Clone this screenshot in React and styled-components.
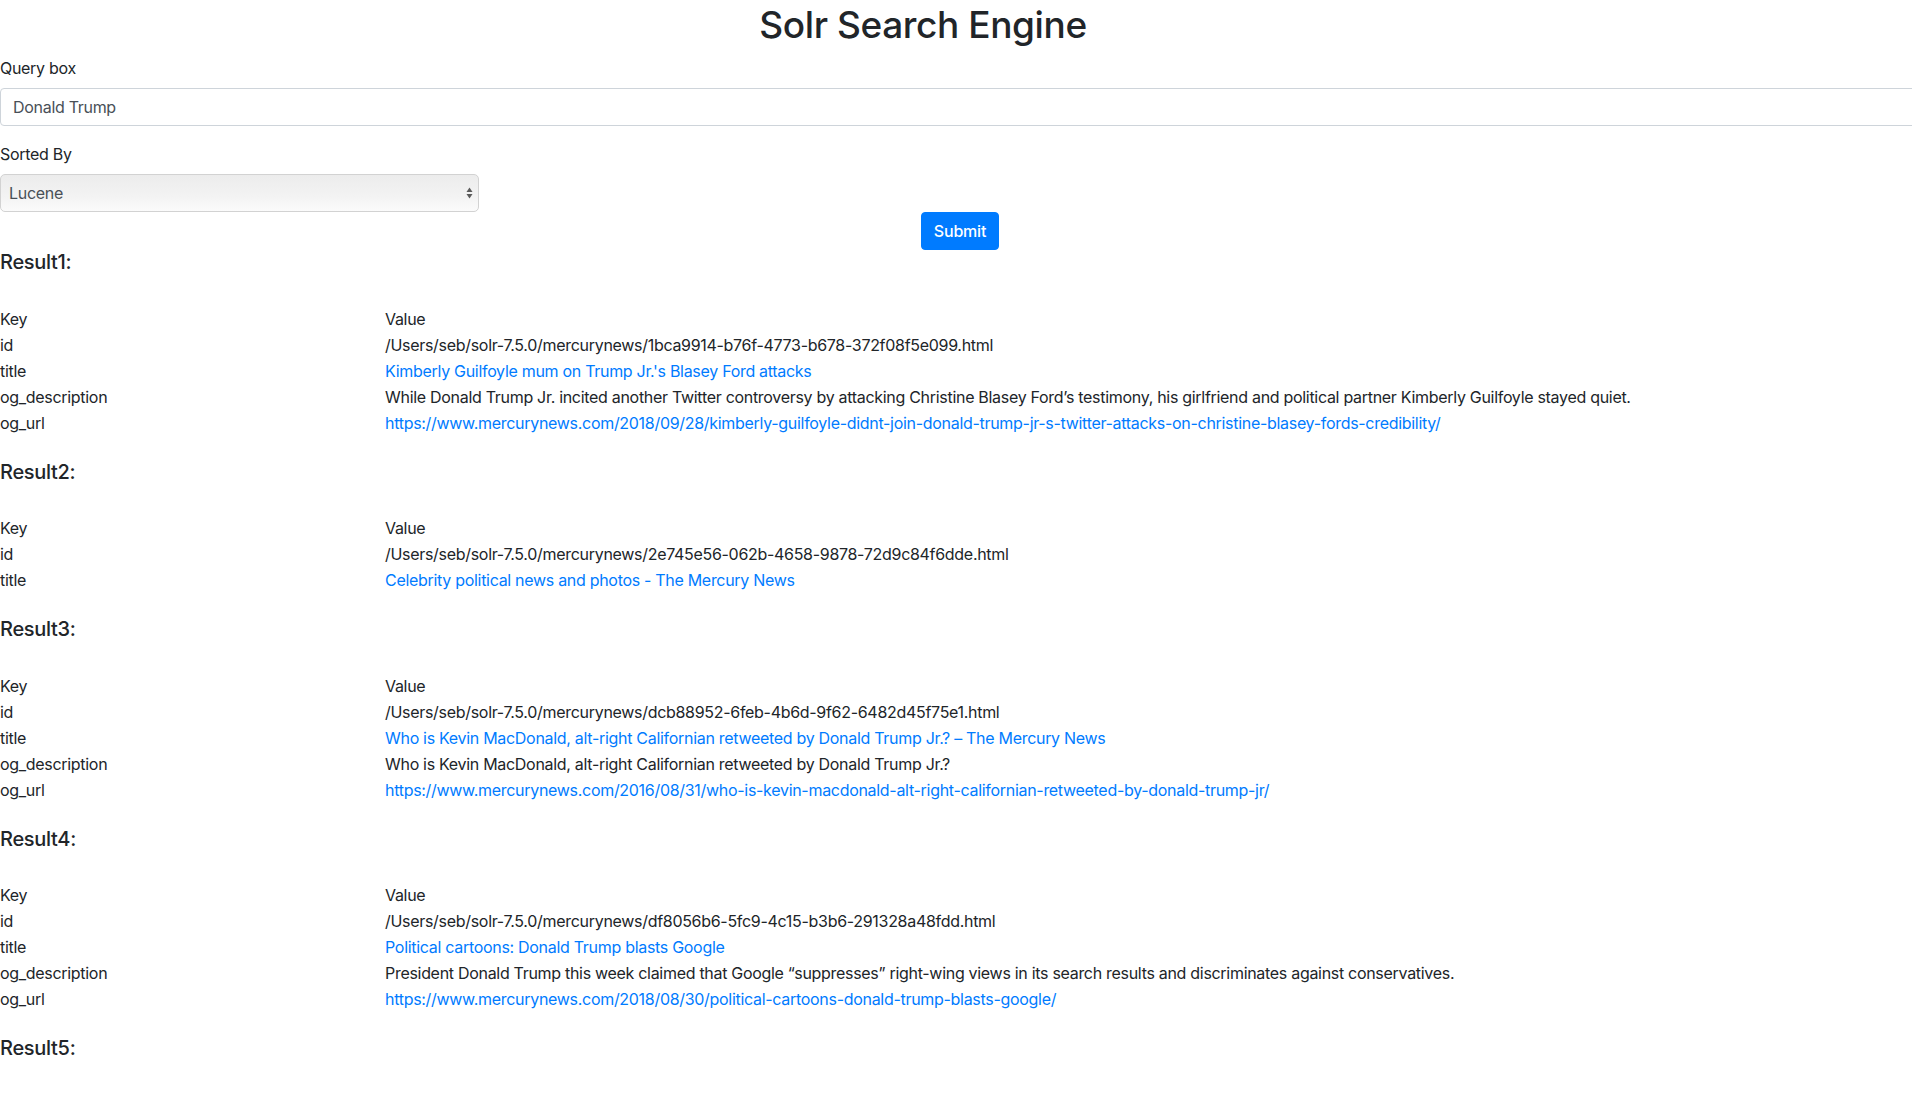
import React from 'react';
import styled, { createGlobalStyle } from 'styled-components';

const GlobalStyle = createGlobalStyle`
    html, body {
        margin: 0;
        padding: 0;
        overflow-x: hidden;
        background: #fff;
    }
    body {
        font-family: Inter, "Liberation Sans", sans-serif;
        font-size: 16px;
        line-height: 1.5;
        letter-spacing: -0.3px;
        color: #212529;
    }
`;

const Page = styled.div`
    width: 1920px;
`;

const Title = styled.h1`
    margin: 0 0 9px 0;
    padding: 3px 74px 0 0;
    font-size: 37px;
    font-weight: 500;
    line-height: 1.2;
    letter-spacing: -0.4px;
    text-align: center;
    color: #212529;
`;

const FormGroup = styled.div`
    margin-bottom: ${props => props.last ? "0" : "16px"};
`;

const Label = styled.label`
    display: block;
    margin-bottom: 8px;
`;

const Input = styled.input`
    display: block;
    box-sizing: border-box;
    width: 100%;
    height: 38px;
    padding: 6px 12px;
    font-family: inherit;
    font-size: 16px;
    letter-spacing: -0.3px;
    color: #495057;
    background: #fff;
    border: 1px solid #ced4da;
    border-radius: 4px;
    outline: none;
`;

const SelectWrap = styled.div`
    position: relative;
    width: 479px;
    height: 38px;
`;

const Select = styled.select`
    appearance: none;
    -webkit-appearance: none;
    box-sizing: border-box;
    width: 100%;
    height: 100%;
    padding: 0 24px 0 8px;
    font-family: inherit;
    font-size: 16px;
    letter-spacing: -0.3px;
    color: #495057;
    background: linear-gradient(#ececec, #f3f3f3 60%, #fbfbfb);
    border: 1px solid #d2d2d2;
    border-radius: 5px;
    outline: none;
`;

const Arrows = styled.svg`
    position: absolute;
    right: 6px;
    top: 13px;
    pointer-events: none;
`;

const ButtonRow = styled.div`
    text-align: center;
`;

const Button = styled.button`
    height: 38px;
    width: 78px;
    padding: 0;
    font-family: inherit;
    font-size: 16px;
    font-weight: 500;
    letter-spacing: -0.2px;
    color: #fff;
    background: #007bff;
    border: 1px solid #007bff;
    border-radius: 4px;
`;

const ResultTitle = styled.h5`
    margin: 0 0 31.5px 0;
    font-size: 20px;
    font-weight: 500;
    line-height: 1.2;
    letter-spacing: -0.3px;
    color: #212529;
`;

const Result = styled.section`
    margin-bottom: 24px;
`;

const Table = styled.div`
    display: grid;
    grid-template-columns: 385px 1fr;
    grid-auto-rows: 26px;
    align-items: center;
`;

const Cell = styled.div`
    white-space: nowrap;
    color: ${props => props.link ? "#007bff" : "#212529"};
`;

const results = [
    {
        id: "/Users/seb/solr-7.5.0/mercurynews/1bca9914-b76f-4773-b678-372f08f5e099.html",
        title: "Kimberly Guilfoyle mum on Trump Jr.'s Blasey Ford attacks",
        desc: "While Donald Trump Jr. incited another Twitter controversy by attacking Christine Blasey Ford\u2019s testimony, his girlfriend and political partner Kimberly Guilfoyle stayed quiet.",
        url: "https://www.mercurynews.com/2018/09/28/kimberly-guilfoyle-didnt-join-donald-trump-jr-s-twitter-attacks-on-christine-blasey-fords-credibility/",
    },
    {
        id: "/Users/seb/solr-7.5.0/mercurynews/2e745e56-062b-4658-9878-72d9c84f6dde.html",
        title: "Celebrity political news and photos - The Mercury News",
    },
    {
        id: "/Users/seb/solr-7.5.0/mercurynews/dcb88952-6feb-4b6d-9f62-6482d45f75e1.html",
        title: "Who is Kevin MacDonald, alt-right Californian retweeted by Donald Trump Jr.? \u2013 The Mercury News",
        desc: "Who is Kevin MacDonald, alt-right Californian retweeted by Donald Trump Jr.?",
        url: "https://www.mercurynews.com/2016/08/31/who-is-kevin-macdonald-alt-right-californian-retweeted-by-donald-trump-jr/",
    },
    {
        id: "/Users/seb/solr-7.5.0/mercurynews/df8056b6-5fc9-4c15-b3b6-291328a48fdd.html",
        title: "Political cartoons: Donald Trump blasts Google",
        desc: "President Donald Trump this week claimed that Google \u201csuppresses\u201d right-wing views in its search results and discriminates against conservatives.",
        url: "https://www.mercurynews.com/2018/08/30/political-cartoons-donald-trump-blasts-google/",
    },
    {
        id: "/Users/seb/solr-7.5.0/mercurynews/placeholder.html",
        title: "",
    },
];

const App = () => {
    return (
        <Page>
            <GlobalStyle />
            <Title>Solr Search Engine</Title>
            <FormGroup>
                <Label>Query box</Label>
                <Input defaultValue="Donald Trump" />
            </FormGroup>
            <FormGroup last>
                <Label>Sorted By</Label>
                <SelectWrap>
                    <Select defaultValue="lucene">
                        <option value="lucene">Lucene</option>
                        <option value="pagerank">PageRank</option>
                    </Select>
                    <Arrows width="7" height="12" viewBox="0 0 7 12">
                        <path d="M3.5 0.5 L6.5 5 L0.5 5 Z" fill="#5a5a5a" />
                        <path d="M3.5 11.5 L6.5 7 L0.5 7 Z" fill="#5a5a5a" />
                    </Arrows>
                </SelectWrap>
            </FormGroup>
            <ButtonRow>
                <Button type="button">Submit</Button>
            </ButtonRow>
            {results.map((r, i) => (
                <Result key={i}>
                    <ResultTitle>Result{i + 1}:</ResultTitle>
                    {i < 4 && (
                        <Table>
                            <Cell>Key</Cell>
                            <Cell>Value</Cell>
                            <Cell>id</Cell>
                            <Cell>{r.id}</Cell>
                            <Cell>title</Cell>
                            <Cell link>{r.title}</Cell>
                            {r.desc && <Cell>og_description</Cell>}
                            {r.desc && <Cell>{r.desc}</Cell>}
                            {r.url && <Cell>og_url</Cell>}
                            {r.url && <Cell link>{r.url}</Cell>}
                        </Table>
                    )}
                </Result>
            ))}
        </Page>
    );
};

export default App;
